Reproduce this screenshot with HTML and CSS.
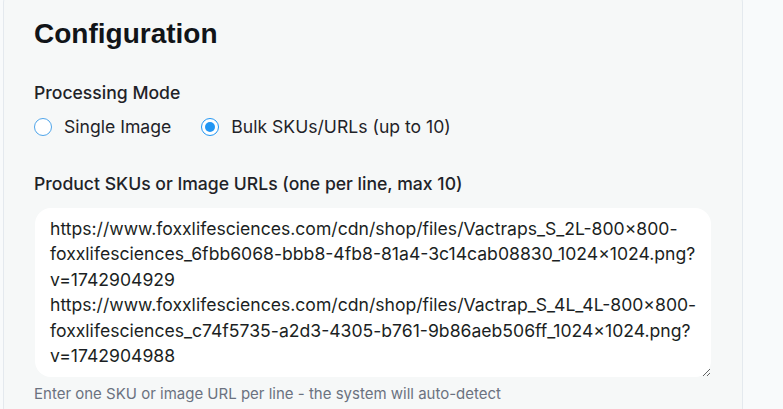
FILE: index.html
```html
<!DOCTYPE html>
<html lang="en">
<head>
<meta charset="utf-8">
<title>Configuration</title>
<link rel="stylesheet" href="styles.css">
</head>
<body>
<section class="card">
  <h2 class="title">Configuration</h2>
  <div class="field mode">
    <div class="label">Processing Mode</div>
    <div class="radios">
      <label class="radio"><span class="dot"></span><span>Single Image</span></label>
      <label class="radio checked"><span class="dot"></span><span>Bulk SKUs/URLs (up to 10)</span></label>
    </div>
  </div>
  <div class="field skus">
    <div class="label">Product SKUs or Image URLs (one per line, max 10)</div>
    <textarea class="input" spellcheck="false">https://www.foxxlifesciences.com/cdn/shop/files/Vactraps_S_2L-800×800-foxxlifesciences_6fbb6068-bbb8-4fb8-81a4-3c14cab08830_1024×1024.png?v=1742904929
https://www.foxxlifesciences.com/cdn/shop/files/Vactrap_S_4L_4L-800×800-foxxlifesciences_c74f5735-a2d3-4305-b761-9b86aeb506ff_1024×1024.png?v=1742904988</textarea>
    <div class="help">Enter one SKU or image URL per line - the system will auto-detect</div>
  </div>
</section>
</body>
</html>
```

FILE: styles.css
```css
* { box-sizing: border-box; }
html, body { margin: 0; padding: 0; }
body {
  background: #f8fafb;
  font-family: Inter, "Noto Sans", sans-serif;
  color: #1f2328;
  overflow: hidden;
}
.card {
  margin: -10px 0 0 3px;
  width: 740px;
  height: 440px;
  background: #f6f8f8;
  border: 1px solid #e4e9ee;
  border-radius: 12px;
  padding: 26px 30px 0 30px;
}
.title {
  margin: 0;
  font-family: "Liberation Sans", Arial, sans-serif;
  font-weight: 700;
  font-size: 28px;
  line-height: 34px;
  color: #111418;
}
.field { display: flex; flex-direction: column; }
.mode { margin-top: 30px; gap: 10px; }
.skus { margin-top: 33px; }
.label {
  font-size: 17.6px;
  line-height: 24px;
  font-weight: 500;
  color: #1f2328;
}
.radios { display: flex; gap: 30px; }
.radio {
  display: flex;
  align-items: center;
  gap: 12px;
  font-size: 17.6px;
  line-height: 24px;
  color: #1f2328;
}
.dot {
  width: 18px;
  height: 18px;
  border-radius: 50%;
  border: 1.5px solid #4fa5ea;
  background: #fff;
  display: flex;
  align-items: center;
  justify-content: center;
}
.checked .dot { border-color: #2196f3; }
.checked .dot::after {
  content: "";
  width: 10px;
  height: 10px;
  border-radius: 50%;
  background: #2196f3;
}
.input {
  margin: 12px 0 0 1px;
  width: 676px;
  height: 169px;
  border: none;
  outline: none;
  background: #fff;
  border-radius: 16px;
  padding: 8px 6px 8px 15px;
  font-family: Inter, "Noto Sans", sans-serif;
  font-size: 17.6px;
  line-height: 25.4px;
  color: #1b1f23;
  resize: vertical;
  overflow: hidden;
}
.help {
  margin-top: 7px;
  font-size: 15px;
  line-height: 20px;
  color: #6b7280;
}
```
